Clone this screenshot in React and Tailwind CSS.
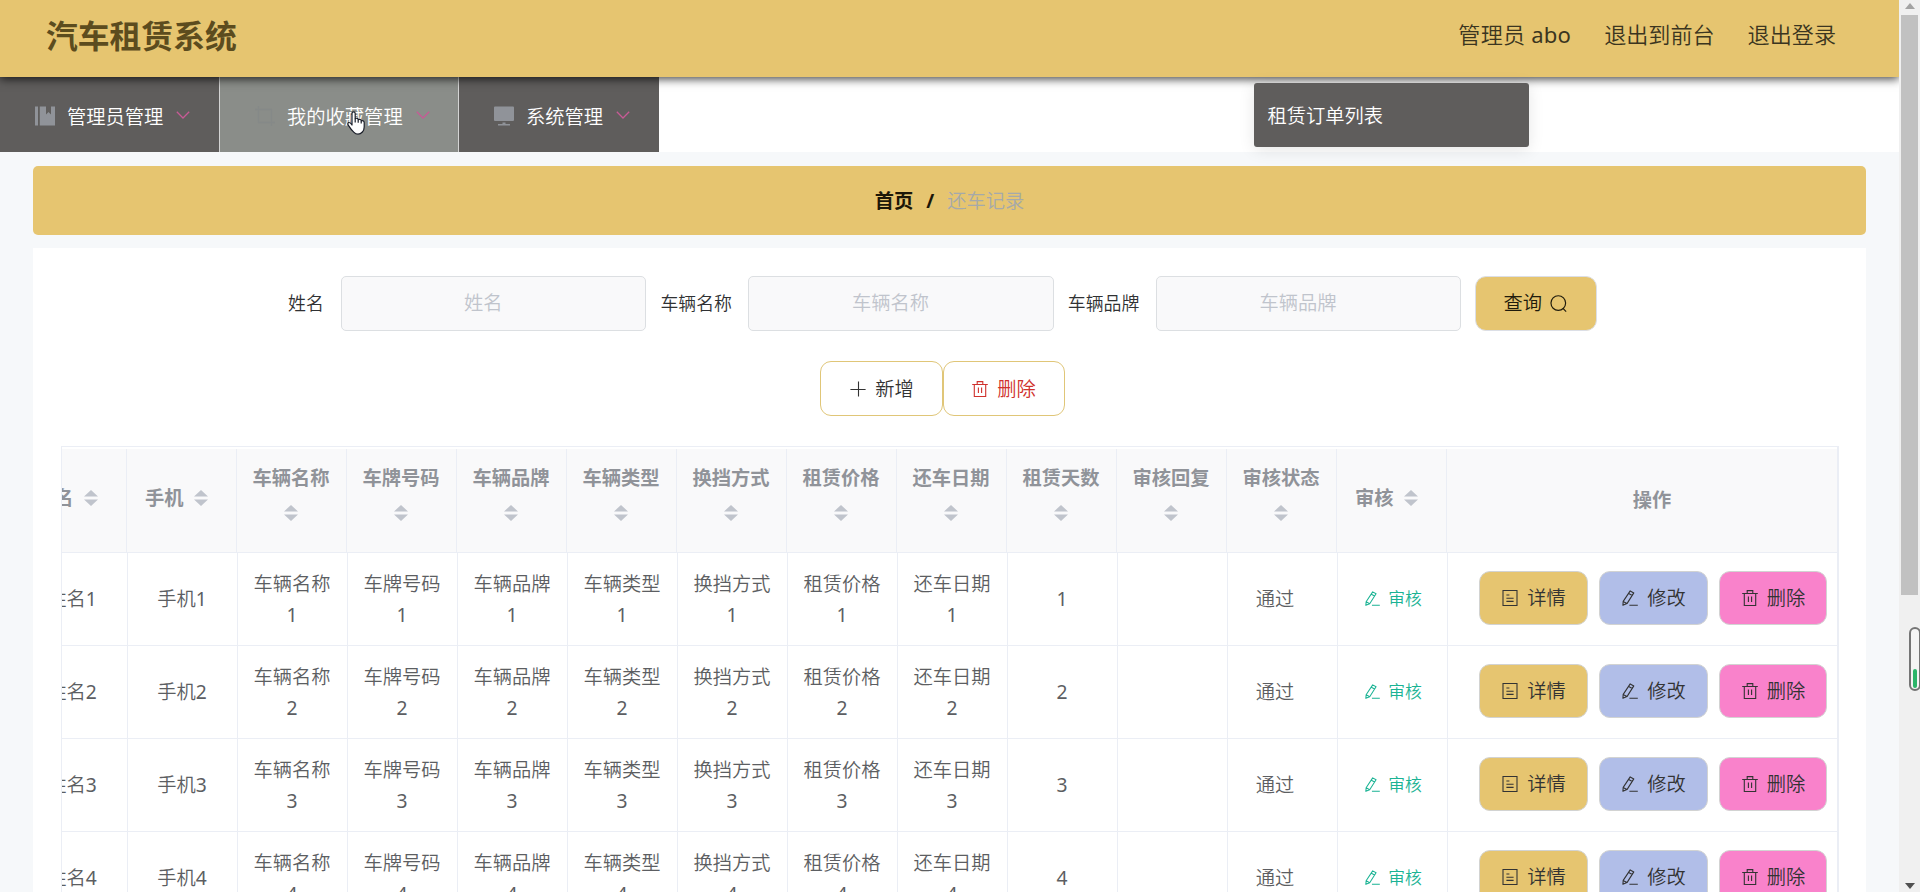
import React from "react";

function Svg({ children, className = "", sw = 1.1, vb = "0 0 16 16" }) {
  return (
    <svg viewBox={vb} className={"shrink-0 " + className} fill="none" stroke="currentColor" strokeWidth={sw}>
      {children}
    </svg>
  );
}

const Trash = ({ className }) => (
  <Svg className={className}>
    <path d="M0.2 3.5H15.8M5.2 3.4V0.6H10.8V3.4M2.3 3.6V15.5H13.7V3.6M6.4 6.6V12M9.6 6.6V12" />
  </Svg>
);
const Edit = ({ className }) => (
  <Svg className={className}>
    <path d="M8.2 0.9L11.8 2.9L5 13.6L0.9 15.3L1.2 11.4ZM6.7 3.4L10.3 5.4M1.2 11.4L4.9 13.5M7.4 15.3H15.8" strokeLinejoin="round" />
  </Svg>
);
const Doc = ({ className }) => (
  <Svg className={className}>
    <path d="M1 0.5H15V15.5H1ZM4.4 5H7.4M4.4 8.2H11.6M4.4 11.4H11.6" />
  </Svg>
);
const Plus = ({ className }) => (
  <Svg className={className}>
    <path d="M0.4 8.5H15.6M8.5 0.4V15.6" />
  </Svg>
);
const Search = ({ className }) => (
  <Svg className={className}>
    <circle cx="7.8" cy="7.6" r="6.9" />
    <path d="M12.2 12.6L15.2 15.6" />
  </Svg>
);

function Chevron() {
  return (
    <Svg vb="0 0 14 10" sw={1.3} className="mb-[3px] ml-[13px] h-[10px] w-[14px] text-[#c75a95]">
      <path d="M0.8 1.8L7 8L13.2 1.8" />
    </Svg>
  );
}

const icons = {
  book: (
    <svg viewBox="0 0 20 20" className="h-5 w-5 text-[#909399]" fill="currentColor">
      <path d="M0 0.5H3V19.5H0ZM4.8 0.5H11V8.5L13.5 6L16 8.5V0.5H20V19.5H4.8Z" />
    </svg>
  ),
  crop: (
    <svg viewBox="0 0 20 20" className="h-5 w-5 text-[#858988]" fill="none" stroke="currentColor" strokeWidth="1.3">
      <path d="M3.5 0V16.5H20M0 3.5H16.5V20" />
    </svg>
  ),
  monitor: (
    <svg viewBox="0 0 20 20" className="h-5 w-5 text-[#909399]" fill="currentColor">
      <path d="M1 0.5H19Q20 0.5 20 1.5V14Q20 15 19 15H1Q0 15 0 14V1.5Q0 0.5 1 0.5ZM8.5 16.5H11.5V18H16V19.5H4V18H8.5Z" />
    </svg>
  ),
};

function NavItem({ icon, label, className }) {
  return (
    <div className={"flex h-full items-center whitespace-nowrap pt-[3px] text-[19.3px] text-white " + className}>
      {icons[icon]}
      <span className="ml-[12px] pt-[2px]">{label}</span>
      <Chevron />
    </div>
  );
}

function Field({ label, labelWidth }) {
  return (
    <div className="mr-[14px] flex items-center">
      <span className={"whitespace-nowrap text-[17.9px] text-[#303133] " + labelWidth}>{label}</span>
      <div className="flex h-[55px] w-[305.4px] items-center justify-center rounded-[5px] border border-[#dcdfe2] bg-[#f9f9fa] pr-[21px] text-[19.25px] text-[#c0c4cc]">
        {label}
      </div>
    </div>
  );
}

function Sort({ className = "" }) {
  return (
    <svg viewBox="0 0 14 16" className={"h-4 w-[14px] shrink-0 text-[#c0c4cc] " + className} fill="currentColor">
      <path d="M7 0L14 6.4H0ZM0 9.4H14L7 16Z" />
    </svg>
  );
}

const gridCols = "grid grid-cols-[repeat(13,110px)_390px]";
const fields = ["车辆名称", "车牌号码", "车辆品牌", "车辆类型", "换挡方式", "租赁价格", "还车日期"];
const wrapped = [...fields, "租赁天数", "审核回复", "审核状态"];

function HeadInline({ label }) {
  return (
    <div className="flex h-full items-center border-r border-[#ebeef5] pb-[6px] pl-[18px]">
      <span className="pt-px">{label}</span>
      <Sort className="ml-[10px]" />
    </div>
  );
}

function TableHead() {
  return (
    <div className={gridCols + " -ml-[45px] h-[104px] border-b border-[#ebeef5] bg-[#f9f9fa] text-[19.25px] font-bold text-[#909399]"}>
      <HeadInline label="姓名" />
      <HeadInline label="手机" />
      {wrapped.map((t) => (
        <div key={t} className="flex h-full flex-col items-center border-r border-[#ebeef5] pr-px pt-[13px]">
          <span className="leading-8">{t}</span>
          <Sort className="mt-[11px]" />
        </div>
      ))}
      <HeadInline label="审核" />
      <div className="flex items-center justify-center pl-[20px]">操作</div>
    </div>
  );
}

function Action({ icon, label, className }) {
  return (
    <div className={"flex h-[54px] items-center justify-center rounded-[11px] border border-[#d2d3d2] pl-px text-[19.25px] text-[#333333] " + className}>
      {icon}
      <span className="ml-[9px] pt-px">{label}</span>
    </div>
  );
}

const Num = ({ n }) => <span className="font-normal">{n}</span>;

function Row({ n }) {
  const cell = "flex h-full items-center justify-center border-r border-[#ebeef5] text-center leading-[31px]";
  return (
    <div className={gridCols + " -ml-[44px] h-[93px] border-b border-[#ebeef5] text-[19.25px] text-[#5c5e62]"}>
      <div className={cell + " pb-px pr-px"}>姓名<Num n={n} /></div>
      <div className={cell + " pb-px pr-px"}>手机<Num n={n} /></div>
      {fields.map((t) => (
        <div key={t} className={cell + " pr-px"}>
          <span>
            {t}
            <br />
            <Num n={n} />
          </span>
        </div>
      ))}
      <div className={cell + " pb-px pr-px"}><Num n={n} /></div>
      <div className={cell}></div>
      <div className={cell + " pb-px pr-[15px]"}>通过</div>
      <div className={cell + " pb-[2px] pl-[2px] text-[16.8px] text-[#1ab394]"}>
        <Edit className="mr-[8px] h-[15px] w-[15px]" />
        审核
      </div>
      <div className="flex items-center pb-[2px] pl-[31px]">
        <Action icon={<Doc className="h-4 w-4" />} label="详情" className="w-[109px] bg-[#e6c570]" />
        <Action icon={<Edit className="h-4 w-4" />} label="修改" className="ml-[11px] w-[109px] bg-[#b1bee8]" />
        <Action icon={<Trash className="h-4 w-4" />} label="删除" className="ml-[11px] w-[108px] bg-[#f982cb]" />
      </div>
    </div>
  );
}

function Scrollbar() {
  return (
    <div className="flex h-full w-[21px] shrink-0 flex-col items-center bg-[#f0f0f0]">
      <svg viewBox="0 0 10 6" className="mt-[3px] h-[6px] w-[10px]" fill="#a3a3a3">
        <path d="M5 0L10 6H0Z" />
      </svg>
      <div className="mt-[6px] h-[580px] w-[17px] bg-[#c1c1c1]" />
      <svg viewBox="0 0 10 6" className="mt-auto mb-[3px] h-[6px] w-[10px]" fill="#505050">
        <path d="M0 0H10L5 6Z" />
      </svg>
    </div>
  );
}

export default function App() {
  return (
    <div className="relative flex h-[892px] w-[1920px] overflow-hidden bg-[#f6f8fa] font-['Noto_Sans','Noto_Sans_CJK_SC',sans-serif] font-[350]">
      <div className="flex h-full w-[1899px] flex-col overflow-hidden">
        <header className="relative z-10 flex h-[77px] shrink-0 items-center bg-[#e6c570] pb-[5px] pl-[46px] pr-[63px] shadow-[0_2px_9px_rgba(0,0,0,0.75)]">
          <h1 className="text-[31.8px] font-bold text-[#5c4c1e]">汽车租赁系统</h1>
          <div className="ml-auto flex items-center gap-[33px] pb-[2px] text-[22.1px] text-[#3b3520]">
            <span className="tracking-[0.2px]">管理员 <span className="font-normal">abo</span></span>
            <span>退出到前台</span>
            <span>退出登录</span>
          </div>
        </header>

        <nav className="flex h-[75px] shrink-0 bg-white">
          <NavItem icon="book" label="管理员管理" className="w-[219px] bg-[#5f5d5c] pl-[35px]" />
          <NavItem icon="crop" label="我的收藏管理" className="w-[240px] border-x border-[#d4d4d4] bg-[#8a8d89] pl-[35px]" />
          <NavItem icon="monitor" label="系统管理" className="w-[200px] bg-[#5f5d5c] pl-[35px]" />
        </nav>

        <main className="flex min-h-0 flex-1 flex-col pl-[33px] pr-[33px] pt-[14px]">
          <div className="flex h-[69px] shrink-0 items-center justify-center rounded-[5px] bg-[#e6c570] pt-px text-[19.25px]">
            <span className="font-bold text-[#1c1708]">首页</span>
            <span className="mx-[13px] font-bold text-[#1c1708]">/</span>
            <span className="text-[#a5a9ab]">还车记录</span>
          </div>

          <section className="mt-[13px] flex min-h-0 flex-1 flex-col bg-white pl-[28px] pr-[27px] pt-[28px]">
            <div className="flex h-[55px] shrink-0 items-center pl-[227px]">
              <Field label="姓名" labelWidth="w-[53px]" />
              <Field label="车辆名称" labelWidth="w-[88px]" />
              <Field label="车辆品牌" labelWidth="w-[88px]" />
              <div className="flex h-[55px] w-[122px] items-center justify-center rounded-[11px] border border-[#dcdfe6] bg-[#e6c570] pr-[2px] text-[19.25px] text-[#1f1b0c]">
                查询
                <Search className="ml-[8px] h-[17px] w-[17px]" />
              </div>
            </div>

            <div className="mt-[30px] flex h-[55px] shrink-0 justify-center pr-[16px] text-[19.25px]">
              <div className="flex w-[123px] items-center justify-center rounded-[11px] border border-[#e0c678] pl-[2px] text-[#333333]">
                <Plus className="mr-[9px] h-4 w-4" />
                <span className="pt-px">新增</span>
              </div>
              <div className="flex w-[122px] items-center justify-center rounded-[11px] border border-[#e0c678] pl-px text-[#d0312d]">
                <Trash className="mr-[9px] h-4 w-4" />
                <span className="pt-px">删除</span>
              </div>
            </div>

            <div className="mt-[30px] min-h-0 flex-1 overflow-hidden border-l border-r-2 border-t border-[#ebeef5] pt-[2px]">
              <TableHead />
              {[1, 2, 3, 4].map((n) => (
                <Row key={n} n={n} />
              ))}
            </div>
          </section>
        </main>
      </div>

      <Scrollbar />

      <div className="absolute left-[1254px] top-[83px] z-20 flex h-[64px] w-[275px] items-center rounded-[3px] bg-[#5f5d5c] pl-[13.5px] pt-[2px] text-[19.25px] text-white shadow-[0_3px_16px_rgba(0,0,0,0.1)]">
        租赁订单列表
      </div>

      <div className="absolute left-[1909px] top-[627px] h-[64px] w-[12px] rounded-full border-2 border-[#757575] bg-[#f4f4f4]">
        <div className="ml-[1.5px] mt-[40px] h-[19px] w-[4px] rounded-full bg-[#2cb56a]" />
      </div>

      <svg viewBox="0 0 18 24" className="absolute left-[347px] top-[111px] z-30 h-[24px] w-[18px]" fill="white" stroke="#1b1f2a" strokeWidth="1.2" strokeLinejoin="round">
        <path d="M5 14V2.6Q5 0.8 6.6 0.8Q8.2 0.8 8.2 2.6V7.6Q11 6.6 11.2 8.6Q14 7.8 14.2 9.8Q17.2 9.2 17.2 11.8V16Q17.2 19 15.4 21Q13.4 23.2 11 23.2Q8.6 23.2 7 21.4Q4 18.6 1.4 14.4Q0.2 12.4 1.6 11.6Q3 11 5 14Z" />
        <path d="M8.2 7.6V11.6M11.2 8.8V11.8M14.2 9.8V12.4" />
      </svg>
    </div>
  );
}
